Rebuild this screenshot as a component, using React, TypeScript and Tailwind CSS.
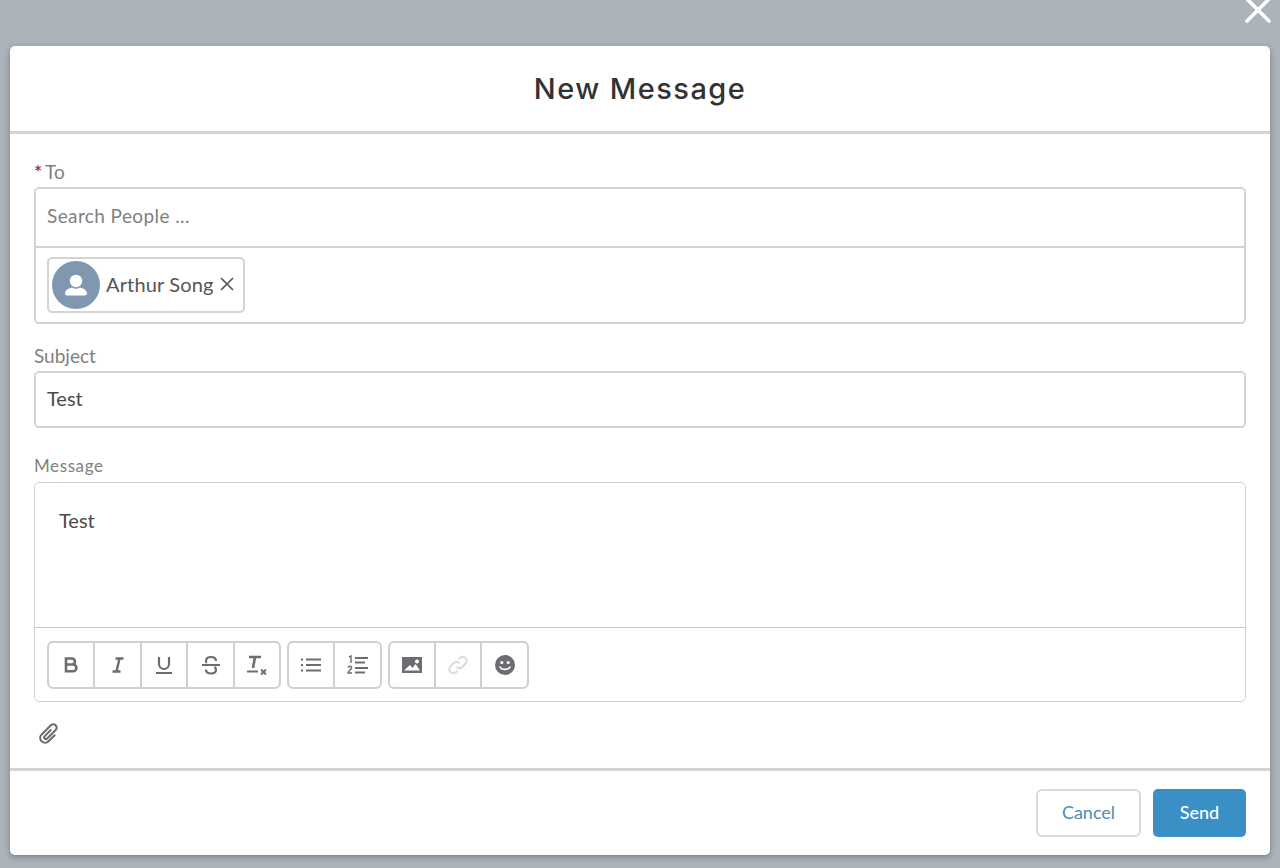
import React from "react";

const font = { fontFamily: '"Lato", "Noto Sans", sans-serif' };

function Btn({ children, last, w = "w-[46px]" }: { children: React.ReactNode; last?: boolean; w?: string }) {
  return (
    <div className={`${w} h-full flex items-center justify-center ${last ? "" : "border-r-2 border-[#d0d0d0]"}`}>
      {children}
    </div>
  );
}

function Group({ children }: { children: React.ReactNode }) {
  return <div className="flex h-[48px] border-2 border-[#d0d0d0] rounded-[6px] bg-white">{children}</div>;
}

const ic = "#6b6d70";

export default function App() {
  return (
    <div className="relative h-[868px] overflow-hidden bg-[#abb3bb] pt-[46px] px-[10px] text-[#4a4a48]" style={font}>
      <svg className="absolute left-[1244px] top-[-3px]" width="28" height="28" viewBox="0 0 28 28">
        <path d="M3 2 L25 24 M25 2 L3 24" stroke="#fff" strokeWidth="3.6" strokeLinecap="round" />
      </svg>
      <div className="h-[809px] flex flex-col bg-white rounded-[5px] shadow-[0_2px_6px_rgba(0,0,0,0.3)]">
        <div className="h-[88px] shrink-0 flex items-center justify-center border-b-[3px] border-[#d4d4d4]">
          <h1 className="text-[29px] tracking-[1.45px] text-[#333] pt-[1px]" style={{ fontFamily: '"Inter", sans-serif', fontWeight: 500 }}>
            New Message
          </h1>
        </div>
        <div className="flex-1 px-[24px] pt-[25px] flex flex-col">
          <div className="h-[28px] text-[19px] leading-[26px] text-[#808080] flex">
            <span className="text-[#b03a32] font-bold mr-[3px]">*</span>To
          </div>
          <div className="h-[137px] border-2 border-[#d4d4d4] rounded-[5px] flex flex-col">
            <div className="h-[59px] px-[11px] pb-[3px] flex items-center text-[19px] text-[#808080] tracking-[0.4px] border-b-2 border-[#d4d4d4]">
              Search People ...
            </div>
            <div className="flex-1 px-[11px] pt-[9px]">
              <div className="w-[198px] h-[56px] border-2 border-[#d4d4d4] rounded-[5px] flex items-center pl-[3px]">
                <div className="w-[48px] h-[48px] rounded-full bg-[#7f97b0] flex items-center justify-center">
                  <svg width="30" height="30" viewBox="0 0 30 30" fill="#fff">
                    <circle cx="15" cy="11" r="6.2" />
                    <path d="M4 23.500c0-3.500 4-5.500 7-6 2.400 1.600 5.600 1.600 8 0 3 .5 7 2.500 7 6 0 1.200-.8 2-2 2H6c-1.200 0-2-.8-2-2z" />
                  </svg>
                </div>
                <span className="ml-[6px] pb-[3px] text-[20px] tracking-[0.15px] text-[#555]">Arthur Song</span>
                <svg className="ml-[6px] mb-[2px]" width="14" height="14" viewBox="0 0 14 14">
                  <path d="M1 1 L13 13 M13 1 L1 13" stroke="#555" strokeWidth="1.700" />
                </svg>
              </div>
            </div>
          </div>
          <div className="mt-[19px] h-[28px] text-[19px] leading-[26px] text-[#808080]">Subject</div>
          <div className="h-[57px] border-2 border-[#d4d4d4] rounded-[5px] px-[11px] pb-[3px] flex items-center text-[20px] text-[#4a4a48]">
            Test
          </div>
          <div className="mt-[26px] h-[28px] text-[17px] tracking-[0.6px] leading-[23px] text-[#808080]">Message</div>
          <div className="h-[220px] border border-[#d0d0d0] rounded-[5px] flex flex-col">
            <div className="h-[145px] border-b border-[#c9c9c9] pl-[24px] pt-[23px] text-[20px] leading-[28px]">Test</div>
            <div className="flex-1 flex gap-[6px] pl-[12px] pt-[13px]">
              <Group>
                <Btn><svg width="16" height="18" viewBox="0 0 16 18" fill="none" stroke={ic} strokeWidth="2.600"><path d="M3 2.500h6a3 3 0 0 1 0 6H3zM3 8.500h7a3.300 3.300 0 0 1 0 6.800H3z" /></svg></Btn>
                <Btn w="w-[47px]"><svg width="14" height="18" viewBox="0 0 14 18" fill="none" stroke={ic} strokeWidth="2.400"><path d="M4.500 2.500h8M1.500 15.500h8M8.500 2.500 5.500 15.500" /></svg></Btn>
                <Btn><svg width="18" height="20" viewBox="0 0 18 20" fill="none" stroke={ic} strokeWidth="2.200"><path d="M4 2v7a5 5 0 0 0 10 0V2M1 18h16" /></svg></Btn>
                <Btn w="w-[47px]"><svg width="20" height="22" viewBox="0 0 20 22" fill="none" stroke={ic} strokeWidth="2.200"><path d="M1 11h18M15 7c0-2.500-2-4-5-4S5 4.500 5 7c0 .8.300 1.500.8 2M13.500 13c1 .7 1.500 1.600 1.500 2.800 0 2.300-2 3.700-5 3.700s-5-1.500-5-4" /></svg></Btn>
                <Btn last w="w-[44px]"><svg width="22" height="22" viewBox="0 0 22 22" fill="none" stroke={ic}><path d="M3 3h12M9 3 7 14" strokeWidth="2.600" /><path d="M1 17.500h11" strokeWidth="2" /><path d="M15 15.500l5 5M20 15.500l-5 5" strokeWidth="2" /></svg></Btn>
              </Group>
              <Group>
                <Btn><svg width="20" height="16" viewBox="0 0 20 16" fill="none" stroke={ic}><path d="M5 2.500h15M5 8h15M5 13.500h15" strokeWidth="2" /><path d="M0 2.500h2M0 8h2M0 13.500h2" strokeWidth="2" /></svg></Btn>
                <Btn last w="w-[45px]"><svg width="22" height="20" viewBox="0 0 22 20" fill="none" stroke={ic}><path d="M8 3h13M8 7.500h10M8 13h13M8 17.500h10" strokeWidth="2" /><path d="M2 2l2-1v7" strokeWidth="1.400" /><path d="M1 12.500c1-2 4-1.500 3.500.5-.3 1.200-3.500 3.500-3.500 5h4" strokeWidth="1.400" /></svg></Btn>
              </Group>
              <Group>
                <Btn><svg width="20" height="16" viewBox="0 0 20 16"><path fillRule="evenodd" fill={ic} d="M0 0h20v16H0zM2 13.500h16l-4.500-6.500-3 4-2.500-3zM15 2.500a2 2 0 1 0 .01 0z" /></svg></Btn>
                <Btn><svg width="22" height="22" viewBox="0 0 22 22" fill="none" stroke="#dcdcdc" strokeWidth="2.200"><path d="M9.500 13a4 4 0 0 0 5.700 0l3.300-3.300a4 4 0 0 0-5.700-5.700l-1.300 1.300" /><path d="M12.500 9a4 4 0 0 0-5.700 0l-3.300 3.300a4 4 0 0 0 5.700 5.700l1.300-1.300" /></svg></Btn>
                <Btn last w="w-[45px]"><svg width="20" height="20" viewBox="0 0 20 20"><circle cx="10" cy="10" r="10" fill={ic} /><circle cx="6.800" cy="7.500" r="1.600" fill="#fff" /><circle cx="13.200" cy="7.500" r="1.600" fill="#fff" /><path d="M5 12c1.500 3.200 8.500 3.200 10 0" fill="none" stroke="#fff" strokeWidth="1.600" strokeLinecap="round" /></svg></Btn>
              </Group>
            </div>
          </div>
          <div className="mt-[20px] pl-[3px] h-[24px]">
            <svg width="24" height="24" viewBox="0 0 24 24" fill="none" stroke={ic} strokeWidth="2.100" strokeLinecap="round">
              <g transform="rotate(45 12 12)">
                <path d="M10.500 8v8.500a1.700 1.700 0 0 0 3.400 0V4.500a3.400 3.400 0 0 0-6.800 0v13a4.900 4.900 0 0 0 9.800 0V9" />
              </g>
            </svg>
          </div>
        </div>
        <div className="h-[87px] shrink-0 border-t-[3px] border-[#d4d4d4] flex items-start justify-end gap-[12px] pt-[18px] pr-[24px]">
          <button className="w-[105px] h-[48px] bg-white border-2 border-[#d8d8d8] rounded-[6px] text-[18px] pb-[2px] text-[#4a90b0]">Cancel</button>
          <button className="w-[93px] h-[48px] bg-[#3a8fc7] rounded-[5px] text-[18px] pb-[2px] font-medium text-white">Send</button>
        </div>
      </div>
    </div>
  );
}
